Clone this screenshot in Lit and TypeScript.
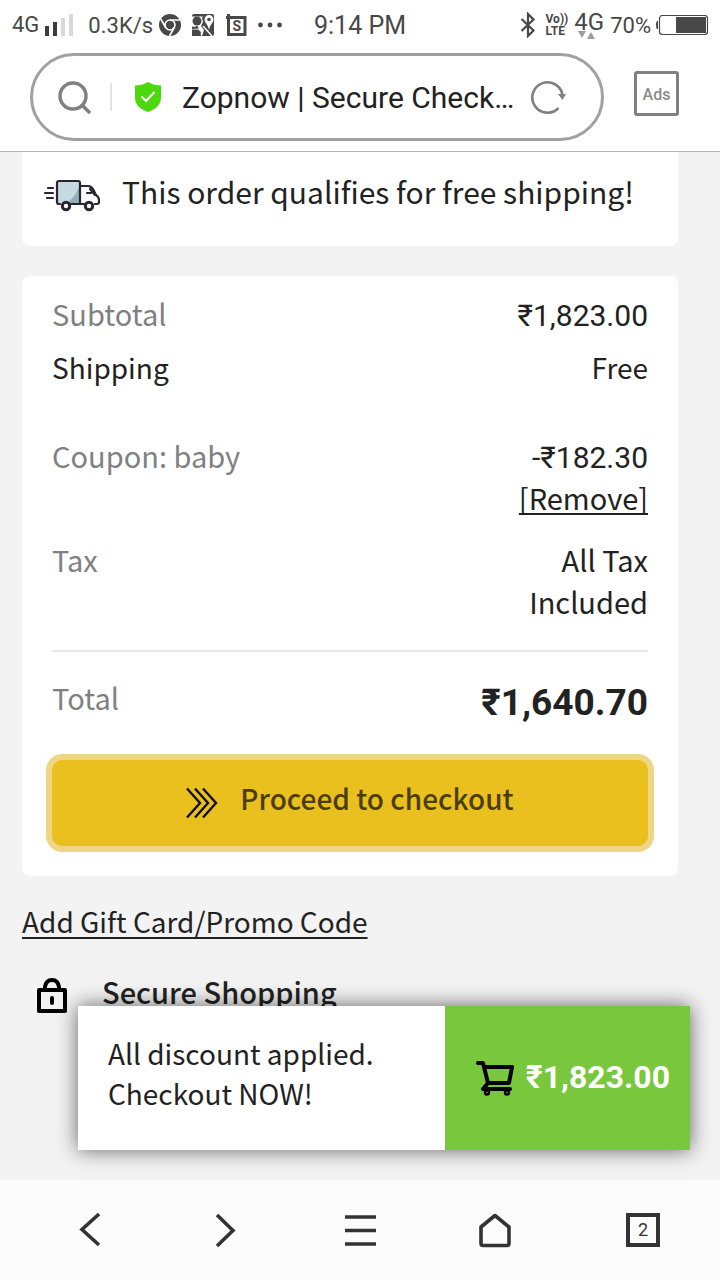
import { LitElement, html, css, svg } from "lit";
import { customElement } from "lit/decorators.js";

@customElement("status-bar")
class StatusBar extends LitElement {
  static styles = css`
    :host {
      display: grid;
      grid-template-columns: 1fr auto 1fr;
      align-items: center;
      height: 50px;
      padding: 0 12px;
      font: 22px/28px Roboto, sans-serif;
      color: #484848;
    }
    svg { display: block; flex: none; }
    .group { display: flex; align-items: center; }
    .end { justify-content: flex-end; }
    .clock { padding-top: 2px; font-size: 25px; }
    .text { padding-top: 2px; }
    .signal { margin: 0 15px 0 6px; }
    .chrome { margin: 0 11px 0 6px; }
    .crop { margin: 0 11px 0 12px; }
    .volte { margin: 0 6px 0 10px; font: 700 12px/12px Roboto, sans-serif; }
    .volte span { display: block; }
    .net { margin-right: 6px; font-size: 24px; line-height: 22px; }
    .net svg { margin: -2px 0 0 4px; }
    .battery { margin: 0 -1px 0 5px; }
  `;
  render() {
    return html`
      <div class="group">
        <span>4G</span>
        <svg class="signal" width="28" height="22" viewBox="0 0 28 22">
          <path fill="#3c3c3c" d="M0 12h4v10H0zM8 8h4v14H8z" />
          <path fill="#d8d8d8" d="M16 4h4v18h-4zM24 0h4v22h-4z" />
        </svg>
        <span class="text">0.3K/s</span>
        <svg class="chrome" width="22" height="22" viewBox="0 0 22 22">
          <circle cx="11" cy="11" r="11" fill="#484848" />
          <circle cx="11" cy="11" r="5" fill="none" stroke="#fff" stroke-width="1.6" />
          <path fill="none" stroke="#fff" stroke-width="1.6" d="M11 6h10M6.700 13.500L1.800 5M15.300 13.500L10.500 22" />
        </svg>
        <svg width="22" height="22" viewBox="0 0 22 22">
          <path fill="#484848" d="M2 0h18q2 0 2 2v18q0 2-2 2H0V2q0-2 2-2z" />
          <path fill="#fff" d="M0 2.500h11L10 4l1 4-2 4 3 4-2 6H8l1-4-3-2.500H0z" />
          <circle cx="5" cy="7" r="4.500" fill="#484848" />
          <circle cx="5" cy="7" r="1.800" fill="#484848" />
          <path fill="#484848" d="M0 12.500q4 1 5-1l2 3-7 .500zM0 19q4-3 8-1l1 4H0z" />
          <path fill="none" stroke="#fff" stroke-width="1.500" d="M11 12l9 10" />
          <path fill="#fff" d="M17 1a4.500 4.500 0 0 0-4.500 4.500C12.500 9 16 10 17 16c1-6 4.500-7 4.500-10.500A4.500 4.500 0 0 0 17 1z" />
          <circle cx="17" cy="5.500" r="1.800" fill="#484848" />
        </svg>
        <svg class="crop" width="21" height="23" viewBox="0 0 21 23">
          <path fill="none" stroke="#484848" stroke-width="3" d="M2.500 0v20.500h16.500V3.500H0" />
          <text x="10.800" y="17" text-anchor="middle" font-family="Roboto, sans-serif" font-size="14" font-weight="700" fill="#484848">S</text>
        </svg>
        <svg width="24" height="6" viewBox="0 0 24 6" fill="#484848">
          <circle cx="2.500" cy="3" r="2.400" /><circle cx="12" cy="3" r="2.400" /><circle cx="21.500" cy="3" r="2.400" />
        </svg>
      </div>
      <span class="clock">9:14 PM</span>
      <div class="group end">
        <svg width="16" height="26" viewBox="0 0 16 26">
          <path fill="none" stroke="#484848" stroke-width="2.200" d="M1.500 7l12 11.500L8 24V2l5.500 5.500L1.500 19" />
        </svg>
        <div class="volte"><span>Vo))</span><span>LTE</span></div>
        <div class="net">
          4G
          <svg width="18" height="8" viewBox="0 0 18 8" fill="#9c9c9c"><path d="M0 0h8L4 7zM9 8h8L13 1z" /></svg>
        </div>
        <span class="text">70%</span>
        <svg class="battery" width="53" height="20" viewBox="0 0 53 20">
          <path fill="#484848" d="M2 6v8H1q-1-1-1-4t1-4z" />
          <rect x="3.500" y=".500" width="48" height="19" rx="3" fill="none" stroke="#484848" stroke-width="1.200" />
          <rect x="20" y="2" width="30" height="16" fill="#484848" />
        </svg>
      </div>
    `;
  }
}

@customElement("address-bar")
class AddressBar extends LitElement {
  static styles = css`
    :host {
      display: flex;
      align-items: flex-start;
      gap: 30px;
      padding: 3px 41px 10px 30px;
      border-bottom: 1px solid #b8b8b8;
      font-family: Roboto, sans-serif;
    }
    svg { display: block; flex: none; }
    button { padding: 0; border: 0; background: none; font: inherit; color: inherit; }
    .pill {
      flex: 1;
      min-width: 0;
      display: flex;
      align-items: center;
      height: 82px;
      padding: 0 35px 0 25px;
      border: 3px solid #a0a0a0;
      border-radius: 44px;
    }
    .rule { width: 2px; height: 28px; margin: 0 22px 0 19px; background: #e2e2e2; }
    .title {
      flex: 1;
      min-width: 0;
      margin: 0 8px 0 20px;
      padding: 2px 0 0;
      border: 0;
      background: none;
      font: 30px/40px Roboto, sans-serif;
      color: #222;
      text-overflow: ellipsis;
    }
    .ads {
      width: 45px;
      height: 45px;
      margin-top: 18px;
      border: 3px solid #808080;
      border-radius: 3px;
      font-size: 16px;
      font-weight: 500;
      color: #8a8a8a;
    }
  `;
  render() {
    return html`
      <div class="pill">
        <svg width="33" height="34" viewBox="0 0 33 34" fill="none" stroke="#808080" stroke-width="3.500">
          <circle cx="15" cy="16" r="13" /><path stroke-linecap="round" d="M24.500 25.500l6.500 6.500" />
        </svg>
        <span class="rule"></span>
        <svg width="28" height="30" viewBox="0 0 28 30">
          <path fill="#4cd90c" d="M14 0q6 3.500 13 3.500V16c0 7-6 11.500-13 14C7 27.500 1 23 1 16V3.500Q8 3.500 14 0z" />
          <path fill="none" stroke="#fff" stroke-width="2" d="M7.500 14.500l4.500 4.500 8.500-9" />
        </svg>
        <input class="title" aria-label="Address" value="Zopnow | Secure Checkout" readonly />
        <button aria-label="Reload">
          <svg width="35" height="34" viewBox="0 0 35 34">
            <path fill="none" stroke="#808080" stroke-width="2.600" d="M27.500 28A15.200 15.200 0 1 1 31.500 15" />
            <path fill="#808080" d="M27 14h8L31.500 20z" />
          </svg>
        </button>
      </div>
      <button class="ads">Ads</button>
    `;
  }
}

@customElement("order-summary")
class OrderSummary extends LitElement {
  static styles = css`
    :host {
      display: block;
      padding: 16px 30px 30px;
      background: #fff;
      border-radius: 8px;
    }
    dl { margin: 0; font-size: 29px; }
    .row { display: flex; justify-content: space-between; margin-bottom: 9px; }
    dt { color: #808080; }
    dd { margin: 0; max-width: 140px; text-align: right; color: #222; }
    .price { padding-top: 3px; font-family: Roboto, sans-serif; font-size: 30px; }
    .plain { margin-bottom: 46px; font-size: 28px; }
    .plain dt { color: #222; }
    .coupon { margin-bottom: 20px; }
    .coupon dd { display: flex; flex-direction: column; align-items: flex-end; }
    .tax { margin-bottom: 28px; }
    .total { margin: 0; padding: 24px 0 36px; border-top: 2px solid #e8e8e8; }
    .total dd { max-width: none; padding-top: 6px; font-size: 37px; font-weight: 700; }
    a { margin-top: -3px; color: inherit; text-underline-offset: 3px; text-decoration-skip-ink: none; }
    .pay {
      display: flex;
      align-items: center;
      justify-content: center;
      gap: 22px;
      width: 100%;
      height: 86px;
      padding: 0 0 10px;
      border: 0;
      border-radius: 10px;
      background: #e9c01d;
      box-shadow: 0 0 0 6px #eed684;
      font: inherit;
      font-weight: 500;
      color: #4c3d06;
    }
    .pay svg { margin-top: 10px; }
  `;
  render() {
    return html`
      <dl>
        <div class="row"><dt>Subtotal</dt><dd class="price">₹1,823.00</dd></div>
        <div class="row plain"><dt>Shipping</dt><dd>Free</dd></div>
        <div class="row coupon"><dt>Coupon: baby</dt><dd><span class="price">-₹182.30</span> <a href="#">[Remove]</a></dd></div>
        <div class="row tax"><dt>Tax</dt><dd>All Tax Included</dd></div>
        <div class="row total"><dt>Total</dt><dd class="price">₹1,640.70</dd></div>
      </dl>
      <button class="pay">
        <svg width="32" height="32" viewBox="0 0 32 32" fill="none" stroke="#120f00" stroke-width="2.400">
          <path d="M1 1.500l13 14.500L1 30.500M9 1.500L22 16 9 30.500M17 1.500L30 16 17 30.500" />
        </svg>
        <span>Proceed to checkout</span>
      </button>
    `;
  }
}

@customElement("cart-toast")
class CartToast extends LitElement {
  static styles = css`
    :host {
      position: absolute;
      left: 78px;
      right: 30px;
      bottom: 30px;
      display: grid;
      grid-template-columns: 3fr 2fr;
      height: 144px;
      background: #fff;
      box-shadow: 0 0 20px rgba(0, 0, 0, 0.6);
    }
    p { margin: 0; padding: 27px 0 30px 30px; line-height: 40px; color: #222; }
    a {
      display: flex;
      align-items: center;
      justify-content: flex-end;
      gap: 11px;
      padding: 0 20px 2px 0;
      background: #78c73c;
      font-family: Roboto, sans-serif;
      font-size: 32px;
      font-weight: 700;
      color: #fff;
      text-decoration: none;
    }
    a svg { margin-top: 2px; }
  `;
  render() {
    return html`
      <p>All discount applied.<br />Checkout NOW!</p>
      <a href="#">
        <svg width="40" height="36" viewBox="0 0 40 36" fill="none" stroke="#000" stroke-width="4" stroke-linejoin="round" stroke-linecap="round">
          <path d="M3 3h5l5 20h21l3-16H10M13 23l-5 6h27" /><circle cx="12" cy="32.500" r="1.200" /><circle cx="32" cy="32.500" r="1.200" />
        </svg>
        <span>₹1,823.00</span>
      </a>
    `;
  }
}

@customElement("browser-nav")
class BrowserNav extends LitElement {
  static styles = css`
    :host {
      display: grid;
      grid-template-columns: repeat(5, 1fr);
      justify-items: center;
      align-items: center;
      height: 100px;
      padding: 0 22px;
      background: #fcfcfc;
    }
    button { display: flex; padding: 0; border: 0; background: none; color: #333; }
    .tabs {
      justify-self: end;
      justify-content: center;
      align-items: center;
      width: 34px;
      height: 34px;
      margin-right: 38px;
      border: 4px solid #333;
      font: 18px/24px Roboto, sans-serif;
    }
  `;
  icon(label: string, shape: unknown) {
    return html`<button aria-label=${label}>
      <svg width="34" height="36" viewBox="0 0 34 36" fill="none" stroke="#333" stroke-width="3.600">${shape}</svg>
    </button>`;
  }
  render() {
    return html`
      ${this.icon("Back", svg`<path d="M26 2L9 17.500 26 33" />`)}
      ${this.icon("Forward", svg`<path d="M9 3l16 15.500L9 34" />`)}
      ${this.icon("Menu", svg`<path d="M2 5h31M2 18.500h31M2 32h31" />`)}
      ${this.icon("Home", svg`<path stroke-linejoin="round" d="M17 3.500L31 15v16q0 2.500-2 2.500H5q-2 0-2-2.500V15z" />`)}
      <button class="tabs" aria-label="Open tabs">2</button>
    `;
  }
}

@customElement("app-root")
class AppRoot extends LitElement {
  static styles = css`
    :host {
      display: flex;
      flex-direction: column;
      height: 100vh;
      background: #fff;
      font: 28px/42px "Noto Sans CJK SC", Roboto, sans-serif;
      color: #222;
    }
    main {
      position: relative;
      flex: 1;
      min-height: 0;
      overflow: hidden;
      padding: 0 42px 0 22px;
      background: #f3f3f3;
    }
    .shipping {
      display: flex;
      align-items: center;
      gap: 22px;
      height: 94px;
      margin-bottom: 30px;
      padding: 0 21px 16px;
      box-sizing: border-box;
      background: #fff;
      border-radius: 0 0 8px 8px;
      font-size: 30px;
    }
    .shipping svg { flex: none; margin-top: 8px; }
    .gift { display: block; margin: 24px 0 28px; color: inherit; text-underline-offset: 4px; text-decoration-skip-ink: none; }
    .secure { display: flex; gap: 34px; margin: 0; padding-left: 14px; font: inherit; font-size: 29px; font-weight: 500; }
    .secure svg { margin-top: 8px; }
  `;
  render() {
    return html`
      <status-bar></status-bar>
      <address-bar></address-bar>
      <main>
        <div class="shipping">
          <svg width="57" height="34" viewBox="0 0 57 34" fill="none" stroke="#2b2530" stroke-width="2.200" stroke-linejoin="round" stroke-linecap="round">
            <rect x="14" y="3" width="23" height="22" rx="2" fill="#c6dbe1" stroke="none" />
            <path fill="#8fb0b8" stroke="none" d="M37 4v21H24q11-8 13-21z" />
            <path d="M17 26h-1q-2 0-2-2V5q0-2 2-2h19q2 0 2 2v21H28M37 8h8q3 0 5 3l3 6q3 2 3 5v2q0 2-2 2h-2M37 26h4M5 10h5M2 15h8M4 20h6M44 15h4M47 11l5 6" />
            <circle cx="23" cy="28" r="3.700" fill="#fff" stroke-width="3" /><circle cx="46" cy="28" r="3.700" fill="#fff" stroke-width="3" />
          </svg>
          <span>This order qualifies for free shipping!</span>
        </div>
        <order-summary></order-summary>
        <a class="gift" href="#">Add Gift Card/Promo Code</a>
        <h2 class="secure">
          <svg width="32" height="36" viewBox="0 0 32 36" fill="none" stroke="#000" stroke-width="4" stroke-linejoin="round">
            <path d="M3 12h26v21H3zM9 12V9q1-7 7-7t7 7v3" /><path stroke-linecap="round" d="M16 20v5" />
          </svg>
          Secure Shopping
        </h2>
        <cart-toast></cart-toast>
      </main>
      <browser-nav></browser-nav>
    `;
  }
}
